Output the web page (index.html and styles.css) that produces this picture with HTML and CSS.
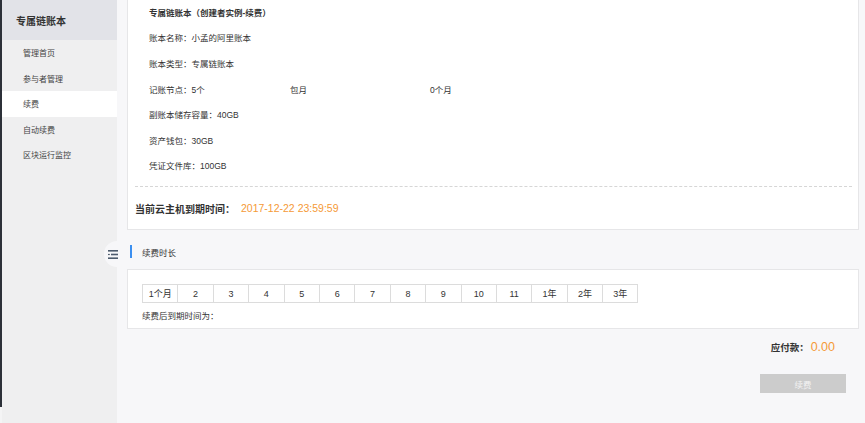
FILE: index.html
```html
<!DOCTYPE html>
<html lang="zh">
<head>
<meta charset="utf-8">
<link rel="stylesheet" href="styles.css">
</head>
<body>
<div class="app">
  <div class="strip"><div class="strip-dark"></div></div>
  <aside class="sidebar">
    <div class="side-head">专属链账本</div>
    <nav class="side-nav">
      <div class="nav-item">管理首页</div>
      <div class="nav-item">参与者管理</div>
      <div class="nav-item active">续费</div>
      <div class="nav-item">自动续费</div>
      <div class="nav-item">区块运行监控</div>
    </nav>
  </aside>
  <main class="main">
    <div class="toggle">
      <svg width="10" height="9" viewBox="0 0 10 9"><rect x="0" y="0" width="10" height="1.6" fill="#4d5b6d"/><rect x="3" y="3.7" width="7" height="1.6" fill="#4d5b6d"/><rect x="0" y="3.9" width="1.8" height="1.2" fill="#4d5b6d"/><rect x="0" y="7.4" width="10" height="1.6" fill="#4d5b6d"/></svg>
    </div>
    <section class="card card-info">
      <div class="info">
        <div class="row title">专属链账本（创建者实例-续费）</div>
        <div class="row">账本名称：小孟的阿里账本</div>
        <div class="row">账本类型：专属链账本</div>
        <div class="row cols"><span class="c1">记账节点：5个</span><span class="c2">包月</span><span>0个月</span></div>
        <div class="row">副账本储存容量：40GB</div>
        <div class="row">资产钱包：30GB</div>
        <div class="row">凭证文件库：100GB</div>
      </div>
      <div class="expire">
        <span class="expire-label">当前云主机到期时间：</span><span class="expire-value">2017-12-22 23:59:59</span>
      </div>
    </section>
    <div class="section-title"><span class="bar"></span>续费时长</div>
    <section class="card card-dur">
      <div class="options">
        <div class="opt">1个月</div>
        <div class="opt">2</div>
        <div class="opt">3</div>
        <div class="opt">4</div>
        <div class="opt">5</div>
        <div class="opt">6</div>
        <div class="opt">7</div>
        <div class="opt">8</div>
        <div class="opt">9</div>
        <div class="opt">10</div>
        <div class="opt">11</div>
        <div class="opt">1年</div>
        <div class="opt">2年</div>
        <div class="opt">3年</div>
      </div>
      <div class="after">续费后到期时间为：</div>
    </section>
    <div class="pay"><span class="pay-label">应付款：</span><span class="pay-value">0.00</span></div>
    <div class="submit-row"><button class="submit">续费</button></div>
  </main>
</div>
</body>
</html>
```

FILE: styles.css
```css
* { box-sizing: border-box; }
html, body { margin: 0; padding: 0; }
body {
  width: 865px;
  height: 423px;
  overflow: hidden;
  font-family: "Liberation Sans", "Noto Sans CJK SC", sans-serif;
  color: #333;
  background: #f7f7f9;
}
.app { display: flex; height: 423px; }
.strip { width: 2px; background: #f4f4f5; }
.strip-dark { height: 407px; background: #2c3038; }
.sidebar { width: 115px; background: #efeff0; }
.side-head {
  height: 40px;
  background: #e2e3e8;
  padding-left: 14px;
  display: flex;
  align-items: center;
  font-size: 10px;
  font-weight: bold;
  color: #333;
}
.nav-item {
  height: 25.5px;
  display: flex;
  align-items: center;
  padding-left: 21px;
  font-size: 8px;
  color: #444;
}
.nav-item.active { background: #fff; }
.main {
  flex: 1;
  position: relative;
  padding: 0 6px 0 10px;
  display: flex;
  flex-direction: column;
}
.toggle {
  position: absolute;
  left: -13px;
  top: 241px;
  width: 26px;
  height: 26px;
  border-radius: 50%;
  background: #f7f7f9;
  display: flex;
  align-items: center;
  padding-left: 4px;
}
.card { background: #fff; border: 1px solid #e6e6e8; }
.card-info { border-top: none; padding: 0 6px 0 7px; }
.info { padding-left: 14px; padding-bottom: 8px; border-bottom: 1px dashed #d6d6d6; }
.row {
  height: 25.6px;
  display: flex;
  align-items: center;
  font-size: 8.5px;
  color: #333;
}
.row.title { font-weight: bold; font-size: 8.5px; height: 24.6px; }
.cols .c1 { width: 141px; }
.cols .c2 { width: 140px; }
.expire {
  height: 42px;
  display: flex;
  align-items: center;
  font-size: 10px;
}
.expire-label { font-weight: bold; color: #333; width: 106px; }
.expire-value { color: #f59a37; font-size: 10.5px; }
.section-title {
  height: 39px;
  padding-top: 4px;
  display: flex;
  align-items: center;
  font-size: 8.5px;
  color: #333;
}
.bar {
  width: 2px;
  height: 13px;
  background: #3b8ff0;
  margin: 0 10px 0 3px;
}
.card-dur { height: 60px; padding: 14px 0 0 14px; }
.options { display: flex; }
.opt {
  width: 36.4px;
  height: 19px;
  border: 1px solid #dcdcdc;
  margin-left: -1px;
  display: flex;
  align-items: center;
  justify-content: center;
  font-size: 9px;
  color: #333;
}
.opt:first-child { margin-left: 0; }
.after {
  height: 24px;
  display: flex;
  align-items: center;
  font-size: 8.5px;
  color: #333;
}
.pay {
  height: 36px;
  display: flex;
  align-items: center;
  justify-content: flex-end;
  padding-right: 24px;
}
.pay-label { font-size: 9.5px; font-weight: bold; color: #333; }
.pay-value { font-size: 12.5px; color: #f59a37; margin-left: 2px; }
.submit-row { display: flex; justify-content: flex-end; padding-top: 9px; padding-right: 13px; }
.submit {
  width: 86px;
  height: 19px;
  border: none;
  background: #cccccc;
  color: #f4f4f4;
  font-family: "Liberation Sans", "Noto Sans CJK SC", sans-serif;
  font-size: 8.5px;
  padding: 0;
}
```
